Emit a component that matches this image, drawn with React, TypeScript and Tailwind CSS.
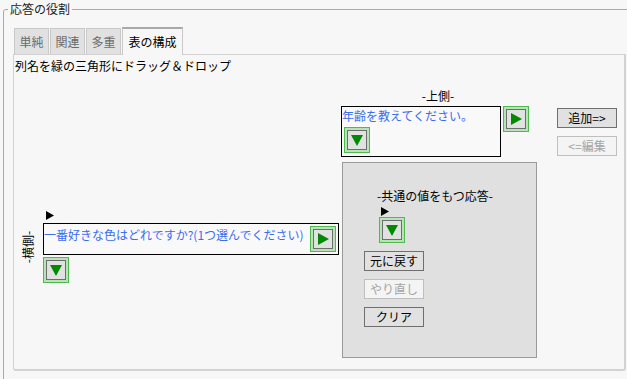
import type { ReactNode } from "react";

const FONT = { fontFamily: '"Noto Sans CJK JP", "Noto Sans", sans-serif' };

const GreenButton = ({ dir }: { dir: "right" | "down" }) => (
  <div className="w-[26px] h-[26px] shrink-0 border border-[#4fb84f] bg-[#b7e3b7] p-[2px]">
    <div className="flex h-full w-full items-center justify-center border border-[#6e6e6e] bg-[#e1e1e1]">
      <svg width="14" height="14" viewBox="0 0 14 14">
        {dir === "right" ? (
          <polygon points="2,1 13,7 2,13" fill="#008a00" />
        ) : (
          <polygon points="1,2 13,2 7,13" fill="#008a00" />
        )}
      </svg>
    </div>
  </div>
);

const SmallArrow = () => (
  <svg width="8" height="9" viewBox="0 0 8 9" className="block">
    <polygon points="0,0 8,4.5 0,9" fill="#000" />
  </svg>
);

const DlgButton = ({
  children,
  disabled,
}: {
  children: ReactNode;
  disabled?: boolean;
}) => (
  <div
    className={
      disabled
        ? "flex h-[20px] w-[60px] items-center justify-center border border-[#bfbfbf] bg-[#f4f4f4] text-[12px] leading-none text-[#a3a3a3]"
        : "flex h-[20px] w-[60px] items-center justify-center border border-[#6f6f6f] bg-[#e1e1e1] text-[12px] leading-none text-black"
    }
  >
    {children}
  </div>
);

const tabs = ["単純", "関連", "多重"];

export default function App() {
  return (
    <div
      className="h-[379px] w-[627px] overflow-hidden bg-[#f7f7f7] text-[12px] text-black"
      style={FONT}
    >
      <fieldset className="ml-[3px] mt-[1px] h-[400px] w-[660px] rounded-tl-[3px] border border-[#a8a8a8] p-0">
        <legend className="ml-[4px] px-[2px] text-[12px] leading-[16px] text-[#222]">
          応答の役割
        </legend>

        {/* tabs */}
        <div className="ml-[10px] mt-[10px] flex items-end">
          {tabs.map((t) => (
            <div
              key={t}
              className="mr-px flex h-[26px] w-[35px] items-center justify-center border border-b-0 border-[#c9c9c9] bg-[#e1e1e1] leading-none text-[#6a6a6a]"
            >
              {t}
            </div>
          ))}
          <div className="relative z-10 -mb-px flex h-[28px] w-[61px] items-center justify-center border border-b-0 border-[#c9c9c9] border-t-[#a8a8a8] border-t-2 bg-[#f7f7f7] leading-none">
            表の構成
          </div>
        </div>

        {/* tab panel */}
        <div className="ml-[9px] h-[317px] w-[613px] rounded-b-[3px] border border-[#d2d2d2] border-b-2 border-r-2 bg-[#f7f7f7] pl-px pt-[3px]">
          <div className="leading-[16px]">列名を緑の三角形にドラッグ＆ドロップ</div>

          {/* top row */}
          <div className="mt-[14px] flex items-start">
            <div className="ml-[326px] flex flex-col">
              <div className="pl-[6px] text-center leading-[16px]">-上側-</div>
              <div className="mt-[2px] flex items-start">
                <div className="h-[51px] w-[160px] border border-black bg-[#f9f9f9] pt-[1px]">
                  <div className="leading-[16px] text-[#3a6cf0]">年齢を教えてください。</div>
                  <div className="ml-[2px] mt-[3px]">
                    <GreenButton dir="down" />
                  </div>
                </div>
                <div className="ml-[2px]">
                  <GreenButton dir="right" />
                </div>
              </div>
            </div>
            <div className="ml-[28px] mt-[20px] flex flex-col gap-[8px]">
              <DlgButton>追加=&gt;</DlgButton>
              <DlgButton disabled>&lt;=編集</DlgButton>
            </div>
          </div>

          {/* bottom row */}
          <div className="mt-[5px] flex items-start">
            <div className="ml-[7px] mt-[49px] flex items-stretch">
              <div className="flex w-[12px] items-center justify-center">
                <span className="-rotate-90 whitespace-nowrap leading-none">-横側-</span>
              </div>
              <div className="ml-[9px] flex flex-col">
                <div className="ml-[3px]">
                  <SmallArrow />
                </div>
                <div className="mt-[3px] flex h-[32px] w-[296px] items-start justify-between border border-black bg-[#f9f9f9]">
                  <div className="pt-[3px] leading-[16px] text-[#3a6cf0]">
                    一番好きな色はどれですか?(1つ選んでください)
                  </div>
                  <div className="mr-[2px] mt-[2px]">
                    <GreenButton dir="right" />
                  </div>
                </div>
                <div className="mt-[2px]">
                  <GreenButton dir="down" />
                </div>
              </div>
            </div>

            <div className="ml-[3px] flex h-[196px] w-[195px] flex-col border border-[#9a9a9a] bg-[#e0e0e0]">
              <div className="ml-[34px] mt-[25px] leading-[16px]">-共通の値をもつ応答-</div>
              <div className="ml-[38px] mt-[3px]">
                <SmallArrow />
              </div>
              <div className="ml-[36px] mt-px">
                <GreenButton dir="down" />
              </div>
              <div className="ml-[21px] mt-[8px] flex flex-col gap-[8px]">
                <DlgButton>元に戻す</DlgButton>
                <DlgButton disabled>やり直し</DlgButton>
                <DlgButton>クリア</DlgButton>
              </div>
            </div>
          </div>
        </div>
      </fieldset>
    </div>
  );
}
